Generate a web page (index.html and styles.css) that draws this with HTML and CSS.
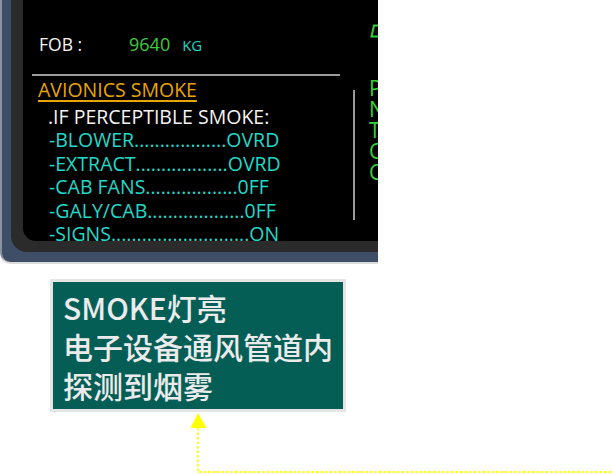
FILE: index.html
```html
<!DOCTYPE html>
<html lang="zh-CN">
<head>
<meta charset="utf-8">
<title>Avionics smoke</title>
<link rel="stylesheet" href="styles.css">
</head>
<body>
<div class="frame">
  <div class="bezel">
    <div class="screen">
      <div class="top">
        <div class="fob">
          <span class="fob-lbl">FOB :</span>
          <span class="fob-qty">9640</span>
          <span class="fob-unit">KG</span>
        </div>
        <svg class="dsym" width="12" height="14" viewBox="0 0 12 14">
          <path d="M11 1.5 H4 L1.5 12.5 H11" fill="none" stroke="#35cf35" stroke-width="2"/>
        </svg>
      </div>
      <div class="rule"></div>
      <div class="body">
        <div class="proc">
          <div class="title">AVIONICS SMOKE</div>
          <div class="cond">.IF PERCEPTIBLE SMOKE:</div>
          <div class="item">-BLOWER..................OVRD</div>
          <div class="item">-EXTRACT..................OVRD</div>
          <div class="item">-CAB FANS..................0FF</div>
          <div class="item">-GALY/CAB...................0FF</div>
          <div class="item">-SIGNS...........................ON</div>
        </div>
        <div class="vline"></div>
        <div class="status">
          <div>P</div>
          <div>N</div>
          <div>T</div>
          <div>C</div>
          <div>C</div>
        </div>
      </div>
    </div>
  </div>
</div>
<div class="note">
  <div>SMOKE灯亮</div>
  <div>电子设备通风管道内</div>
  <div>探测到烟雾</div>
</div>
<svg class="connector" width="613" height="474" viewBox="0 0 613 474">
  <polygon points="198,413 190.5,428 206.5,428" fill="#ffff00"/>
  <path d="M198 428 V472 H613" fill="none" stroke="#ffff00" stroke-width="2" stroke-dasharray="2.5 2"/>
</svg>
</body>
</html>
```

FILE: styles.css
```css
html, body {
  margin: 0;
  padding: 0;
  background: #ffffff;
}

body {
  width: 613px;
  height: 474px;
  position: relative;
  overflow: hidden;
}

.frame {
  box-sizing: border-box;
  width: 378px;
  height: 262px;
  background: #3e4e67;
  border-left: 2px solid #8a93a1;
  padding: 0 0 10px 9px;
  border-bottom-left-radius: 10px;
  box-shadow: 0 2px 0 #dadada;
  overflow: hidden;
}

.bezel {
  height: 100%;
  box-sizing: border-box;
  background: #2b2b2b;
  padding: 0 0 11px 12px;
  border-bottom-left-radius: 16px;
}

.screen {
  height: 241px;
  box-sizing: border-box;
  background: #000;
  border-bottom-left-radius: 13px;
  padding-left: 16px;
  overflow: hidden;
  font-family: "Open Sans", "Noto Sans", sans-serif;
  font-weight: 500;
}

.top {
  height: 74px;
  box-sizing: border-box;
  padding-top: 24px;
  display: flex;
  align-items: flex-start;
}

.fob {
  flex: 0 0 331px;
  margin-top: 8px;
  display: flex;
  align-items: baseline;
  line-height: 24px;
}

.fob-lbl {
  width: 90px;
  color: #f4f4f4;
  font-size: 17.5px;
}

.fob-qty {
  color: #3ccd3c;
  font-size: 18px;
}

.fob-unit {
  color: #22d6c8;
  font-size: 15px;
  margin-left: 12px;
}

.dsym {
  flex: 0 0 12px;
  display: block;
}

.rule {
  height: 2px;
  width: 308px;
  margin-left: -7px;
  background: #9a9a9a;
}

.body {
  display: flex;
  align-items: flex-start;
}

.proc {
  flex: 0 0 314px;
  padding-top: 1.5px;
  font-size: 19.5px;
  line-height: 23.5px;
  white-space: nowrap;
}

.title {
  color: #e8a500;
  margin-left: -1px;
  margin-bottom: 3.5px;
  text-decoration: underline;
  text-decoration-thickness: 1.5px;
  text-underline-offset: 3px;
}

.cond {
  color: #f4f4f4;
  padding-left: 9px;
}

.item {
  color: #22d9c9;
  padding-left: 10px;
}

.vline {
  flex: 0 0 2px;
  height: 130px;
  margin-top: 14px;
  background: #9a9a9a;
}

.status {
  flex: 0 0 auto;
  margin-left: 14px;
  padding-top: 2.4px;
  color: #35d235;
  font-size: 21px;
  line-height: 20.8px;
}

.note {
  box-sizing: border-box;
  width: 296px;
  height: 133px;
  margin: 17px 0 0 50px;
  border: 3px solid #e5e5e5;
  background: #055e56;
  padding: 6px 0 0 10px;
  color: #ebebeb;
  font-family: "Noto Sans CJK SC", "Noto Sans", sans-serif;
  font-size: 30px;
  font-weight: 500;
  line-height: 39px;
  white-space: nowrap;
}

.connector {
  position: absolute;
  left: 0;
  top: 0;
  pointer-events: none;
}
```
